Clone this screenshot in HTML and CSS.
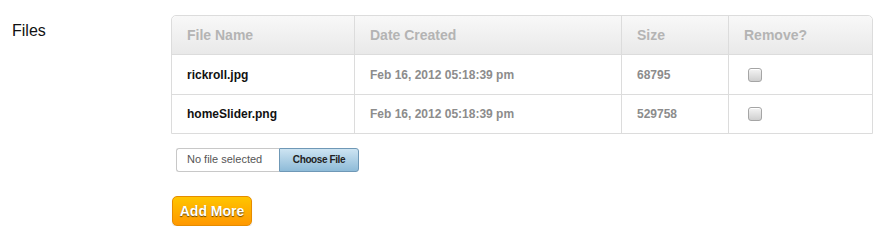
FILE: index.html
```
<!DOCTYPE html>
<html lang="en">

<head>
    <meta charset="UTF-8">
    <title>Files</title>
    <link rel="stylesheet" href="styles.css">
</head>

<body>
    <div class="form-row">
        <label class="form-label">Files</label>

        <div class="form-field">
            <table class="file-table">
                <colgroup>
                    <col class="col-name">
                    <col class="col-date">
                    <col class="col-size">
                    <col class="col-remove">
                </colgroup>
                <thead>
                    <tr>
                        <th>File Name</th>
                        <th>Date Created</th>
                        <th>Size</th>
                        <th>Remove?</th>
                    </tr>
                </thead>
                <tbody>
                    <tr>
                        <td class="file-name">rickroll.jpg</td>
                        <td>Feb 16, 2012 05:18:39 pm</td>
                        <td>68795</td>
                        <td><input type="checkbox" class="remove-box"></td>
                    </tr>
                    <tr>
                        <td class="file-name">homeSlider.png</td>
                        <td>Feb 16, 2012 05:18:39 pm</td>
                        <td>529758</td>
                        <td><input type="checkbox" class="remove-box"></td>
                    </tr>
                </tbody>
            </table>

            <div class="file-picker">
                <span class="file-status">No file selected</span>
                <span class="file-button">Choose File</span>
            </div>

            <button class="add-more">Add More</button>
        </div>
    </div>
</body>

</html>
```

FILE: styles.css
```
body {
    margin: 0;
    padding: 0;
    background: #fff;
    font-family: "Liberation Sans", Arial, sans-serif;
    color: #111;
}

.form-row {
    display: flex;
    padding-top: 15px;
}

.form-label {
    width: 159px;
    padding-left: 12px;
    padding-top: 6px;
    font-size: 16px;
    line-height: 20px;
    color: #111;
}

.form-field {
    display: flex;
    flex-direction: column;
    align-items: flex-start;
}

.file-table {
    width: 702px;
    border-collapse: separate;
    border-spacing: 0;
    border: 1px solid #dcdcdc;
    border-radius: 5px 5px 0 0;
    table-layout: fixed;
}

.col-name { width: 182px; }
.col-date { width: 267px; }
.col-size { width: 107px; }
.col-remove { width: 144px; }

.file-table th {
    height: 38px;
    padding: 0 15px;
    text-align: left;
    font-size: 14px;
    line-height: 16px;
    font-weight: bold;
    color: #b4b4b4;
    background: linear-gradient(#f8f8f8, #e9e9e9);
    border-left: 1px solid #dcdcdc;
}

.file-table th:first-child {
    border-left: none;
    border-top-left-radius: 5px;
}

.file-table th:last-child {
    border-top-right-radius: 5px;
}

.file-table td {
    height: 39px;
    padding: 0 15px;
    font-size: 12px;
    line-height: 14px;
    font-weight: bold;
    color: #8c8c8c;
    border-top: 1px solid #dcdcdc;
    border-left: 1px solid #dcdcdc;
}

.file-table td:first-child {
    border-left: none;
}

.file-table tbody tr:last-child td {
    height: 38px;
}

.file-table td.file-name {
    color: #111;
}

.remove-box {
    appearance: none;
    -webkit-appearance: none;
    display: block;
    width: 14px;
    height: 14px;
    margin: 0 0 0 4px;
    border: 1px solid #a5a5a5;
    border-radius: 3px;
    background: linear-gradient(#f4f4f4, #cfcfcf);
    box-shadow: inset 0 1px 0 #fff;
}

.file-picker {
    display: flex;
    margin-top: 14px;
    margin-left: 5px;
    height: 24px;
}

.file-status {
    width: 92px;
    padding-left: 10px;
    border: 1px solid #c8c8c8;
    border-right: none;
    border-radius: 3px 0 0 3px;
    font-size: 11px;
    line-height: 21px;
    color: #555;
    background: #fff;
}

.file-button {
    width: 78px;
    border: 1px solid #6f98b6;
    border-radius: 0 3px 3px 0;
    background: linear-gradient(#cde4f2, #8ebbd8);
    font-size: 10px;
    font-weight: bold;
    letter-spacing: -0.4px;
    line-height: 22px;
    text-align: center;
    color: #222;
}

.add-more {
    margin-top: 24px;
    margin-left: 1px;
    width: 80px;
    height: 30px;
    padding: 0;
    border: 1px solid #e58c00;
    border-radius: 5px;
    background: linear-gradient(#ffc500, #ff9800);
    font-family: "Liberation Sans", Arial, sans-serif;
    font-size: 14px;
    font-weight: bold;
    color: #fff;
    text-shadow: 0 1px 1px rgba(0, 0, 0, 0.6);
    box-shadow: 0 1px 1px rgba(0, 0, 0, 0.15);
    cursor: pointer;
}
```
